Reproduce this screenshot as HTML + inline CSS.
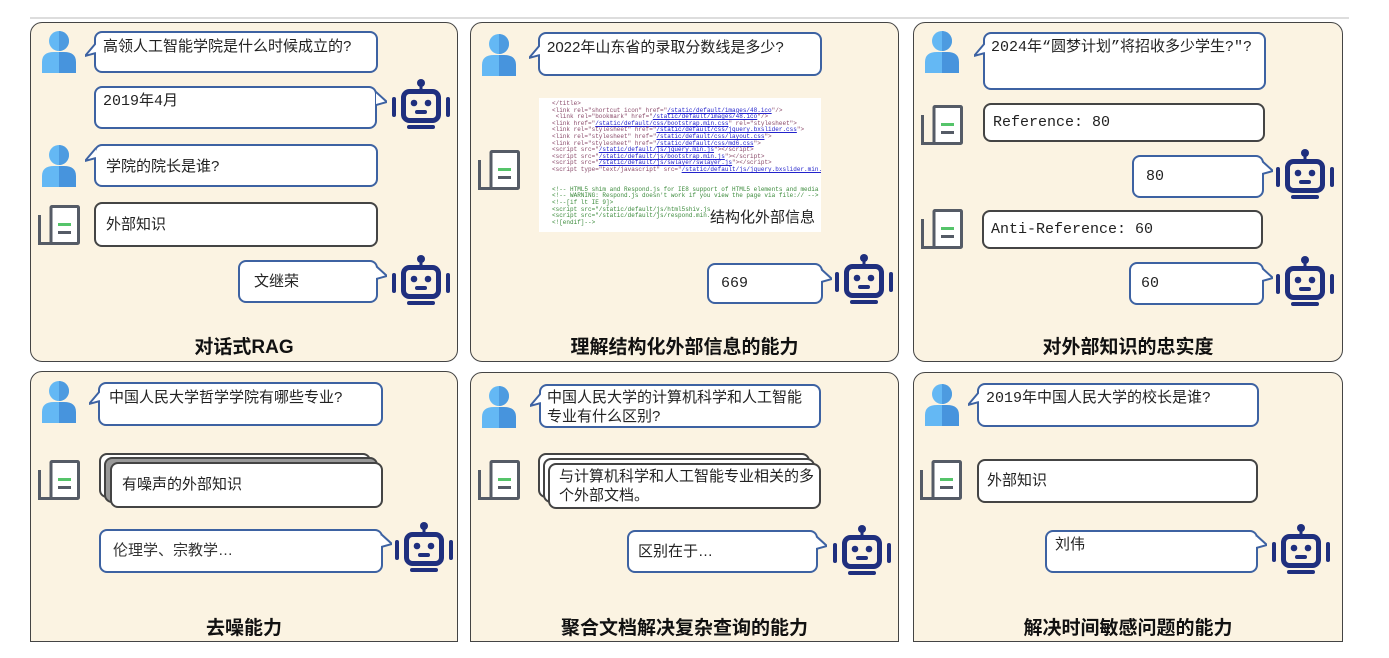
<!DOCTYPE html>
<html><head><meta charset="utf-8"><style>
*{margin:0;padding:0;box-sizing:border-box}
body{width:1389px;height:658px;background:#fff;position:relative;overflow:hidden;font-family:"Liberation Sans","Noto Sans CJK SC",sans-serif;color:#222}
.p{position:absolute;background:#fbf3e2;border:1.5px solid #444;border-radius:12px 12px 0 0}
.b{position:absolute;background:#fff;border:2px solid #3d62a2;border-radius:8px;font-size:15px;line-height:20px;padding:4px 7px;white-space:nowrap}
.k{position:absolute;background:#fff;border:2px solid #444;border-radius:8px;font-size:15px;line-height:20px;padding:0 10px;display:flex;align-items:center;white-space:nowrap}
.m{font-family:"Liberation Mono","Noto Sans CJK SC",monospace}
.t{position:absolute;font-size:19px;font-weight:bold;text-align:center;color:#111}
svg.i{position:absolute;overflow:visible}
</style></head><body>
<svg width="0" height="0" style="position:absolute">
<defs>
<symbol id="u" viewBox="0 0 34 43"><circle cx="17" cy="11" r="10" fill="#64b8f4"/><path d="M17 1a10 10 0 0 1 0 20z" fill="#4d9be0"/><path d="M0 43V32q0-10 12-10h5v21z" fill="#64b8f4"/><path d="M17 22h5q12 0 12 10v11H17z" fill="#4794dd"/></symbol>
<symbol id="r" viewBox="0 0 58 52"><circle cx="29" cy="4" r="4" fill="#1f2f7e"/><rect x="27.5" y="6" width="3" height="6" fill="#1f2f7e"/><rect x="11.5" y="12.5" width="35" height="29" rx="6" fill="none" stroke="#1f2f7e" stroke-width="5"/><circle cx="22" cy="24" r="3.3" fill="#1f2f7e"/><circle cx="36" cy="24" r="3.3" fill="#1f2f7e"/><rect x="23" y="31" width="12" height="4" rx="2" fill="#1f2f7e"/><rect x="0" y="18" width="4" height="20" rx="2" fill="#1f2f7e"/><rect x="54" y="18" width="4" height="20" rx="2" fill="#1f2f7e"/><rect x="15" y="46" width="28" height="4" rx="2" fill="#1f2f7e"/></symbol>
<symbol id="d" viewBox="0 0 42 40"><path d="M1.5 10V38.5H14" fill="none" stroke="#555b66" stroke-width="3"/><rect x="13" y="1.5" width="27.5" height="37" rx="1" fill="#fff" stroke="#555b66" stroke-width="3"/><rect x="20" y="18" width="13" height="3" fill="#55c46a"/><rect x="20" y="26" width="13" height="3" fill="#555b66"/></symbol>
<symbol id="tl" viewBox="0 0 11 16"><path d="M11 1L0 14 11 11" fill="#fff" stroke="#3d62a2" stroke-width="2"/></symbol>
<symbol id="tr" viewBox="0 0 11 16"><path d="M0 1L11 11 0 14" fill="#fff" stroke="#3d62a2" stroke-width="2"/></symbol>
</defs></svg>
<div style="position:absolute;left:30px;top:17px;width:1319px;height:2px;background:#ddd"></div>

<!-- panel 1 -->
<div class="p" style="left:30px;top:22px;width:428px;height:340px;border-radius:12px"></div>
<svg class="i" style="left:42px;top:30px" width="34" height="43"><use href="#u"/></svg>
<div class="b" style="left:94px;top:31px;width:284px;height:42px">高领人工智能学院是什么时候成立的?</div>
<svg class="i" style="left:85px;top:42px" width="11" height="16"><use href="#tl"/></svg>
<div class="b m" style="left:94px;top:86px;width:283px;height:43px">2019年4月</div>
<svg class="i" style="left:376px;top:91px" width="11" height="16"><use href="#tr"/></svg>
<svg class="i" style="left:392px;top:79px" width="58" height="52"><use href="#r"/></svg>
<svg class="i" style="left:42px;top:144px" width="34" height="43"><use href="#u"/></svg>
<div class="b" style="left:94px;top:144px;width:284px;height:43px;padding-top:11px;padding-left:10px">学院的院长是谁?</div>
<svg class="i" style="left:85px;top:147px" width="11" height="16"><use href="#tl"/></svg>
<svg class="i" style="left:38px;top:205px" width="42" height="40"><use href="#d"/></svg>
<div class="k" style="left:94px;top:202px;width:284px;height:45px">外部知识</div>
<div class="b" style="left:238px;top:260px;width:140px;height:43px;padding:10px 14px">文继荣</div>
<svg class="i" style="left:376px;top:265px" width="11" height="16"><use href="#tr"/></svg>
<svg class="i" style="left:392px;top:255px" width="58" height="52"><use href="#r"/></svg>
<div class="t" style="left:30px;top:332px;width:428px">对话式RAG</div>

<!-- panel 2 -->
<div class="p" style="left:470px;top:22px;width:429px;height:340px;border-radius:12px"></div>
<svg class="i" style="left:482px;top:33px" width="34" height="43"><use href="#u"/></svg>
<div class="b" style="left:538px;top:32px;width:284px;height:44px">2022年山东省的录取分数线是多少?</div>
<svg class="i" style="left:529px;top:44px" width="11" height="16"><use href="#tl"/></svg>
<div style="position:absolute;left:539px;top:98px;width:282px;height:134px;background:#fff;font-family:'Liberation Mono',monospace;font-size:6px;line-height:6.6px;color:#8a4a6a;padding:3px 0 0 13px;white-space:pre;overflow:hidden">&lt;/title&gt;
&lt;link rel="shortcut icon" href="<u style="color:#22c">/static/default/images/48.ico</u>"/&gt;
 &lt;link rel="bookmark" href="<u style="color:#22c">/static/default/images/48.ico</u>"/&gt;
&lt;link href="<u style="color:#22c">/static/default/css/bootstrap.min.css</u>" rel="stylesheet"&gt;
&lt;link rel="stylesheet" href="<u style="color:#22c">/static/default/css/jquery.bxslider.css</u>"&gt;
&lt;link rel="stylesheet" href="<u style="color:#22c">/static/default/css/layout.css</u>"&gt;
&lt;link rel="stylesheet" href="<u style="color:#22c">/static/default/css/md6.css</u>"&gt;
&lt;script src="<u style="color:#22c">/static/default/js/jquery.min.js</u>"&gt;&lt;/script&gt;
&lt;script src="<u style="color:#22c">/static/default/js/bootstrap.min.js</u>"&gt;&lt;/script&gt;
&lt;script src="<u style="color:#22c">/static/default/js/swlayer/swlayer.js</u>"&gt;&lt;/script&gt;
&lt;script type="text/javascript" src="<u style="color:#22c">/static/default/js/jquery.bxslider.min.js</u>"&gt;&lt;/script&gt;


<span style="color:#3a8a3a">&lt;!-- HTML5 shim and Respond.js for IE8 support of HTML5 elements and media queries --&gt;
&lt;!-- WARNING: Respond.js doesn't work if you view the page via file:// --&gt;
&lt;!--[if lt IE 9]&gt;
&lt;script src="/static/default/js/html5shiv.js"&gt;&lt;/script&gt;
&lt;script src="/static/default/js/respond.min.js"&gt;&lt;/script&gt;
&lt;![endif]--&gt;</span>

&lt;script language ="javascript"&gt;
<span style="color:#222">    function ValidateValue(textbox)</span></div>
<div style="position:absolute;left:710px;top:206px;font-size:15px;background:#fff;color:#222">结构化外部信息</div>
<svg class="i" style="left:478px;top:150px" width="42" height="40"><use href="#d"/></svg>
<div class="b m" style="left:707px;top:263px;width:116px;height:41px;padding:9px 12px">669</div>
<svg class="i" style="left:821px;top:268px" width="11" height="16"><use href="#tr"/></svg>
<svg class="i" style="left:835px;top:254px" width="58" height="52"><use href="#r"/></svg>
<div class="t" style="left:470px;top:332px;width:429px">理解结构化外部信息的能力</div>

<!-- panel 3 -->
<div class="p" style="left:913px;top:22px;width:430px;height:340px;border-radius:12px"></div>
<svg class="i" style="left:925px;top:30px" width="34" height="43"><use href="#u"/></svg>
<div class="b m" style="left:983px;top:32px;width:283px;height:58px;padding-left:6px">2024年“圆梦计划”将招收多少学生?"?</div>
<svg class="i" style="left:974px;top:42px" width="11" height="16"><use href="#tl"/></svg>
<svg class="i" style="left:921px;top:105px" width="42" height="40"><use href="#d"/></svg>
<div class="k m" style="left:983px;top:103px;width:282px;height:39px;padding-left:8px">Reference: 80</div>
<div class="b m" style="left:1132px;top:155px;width:132px;height:43px;padding:10px 12px">80</div>
<svg class="i" style="left:1262px;top:160px" width="11" height="16"><use href="#tr"/></svg>
<svg class="i" style="left:1276px;top:149px" width="58" height="52"><use href="#r"/></svg>
<svg class="i" style="left:921px;top:209px" width="42" height="40"><use href="#d"/></svg>
<div class="k m" style="left:982px;top:210px;width:281px;height:39px;padding-left:7px">Anti-Reference: 60</div>
<div class="b m" style="left:1129px;top:262px;width:135px;height:43px;padding:10px 10px">60</div>
<svg class="i" style="left:1262px;top:267px" width="11" height="16"><use href="#tr"/></svg>
<svg class="i" style="left:1276px;top:256px" width="58" height="52"><use href="#r"/></svg>
<div class="t" style="left:913px;top:332px;width:430px">对外部知识的忠实度</div>

<!-- panel 4 -->
<div class="p" style="left:30px;top:371px;width:428px;height:271px"></div>
<svg class="i" style="left:42px;top:380px" width="34" height="43"><use href="#u"/></svg>
<div class="b" style="left:98px;top:382px;width:285px;height:44px;padding-left:9px">中国人民大学哲学学院有哪些专业?</div>
<svg class="i" style="left:89px;top:390px" width="11" height="16"><use href="#tl"/></svg>
<svg class="i" style="left:38px;top:460px" width="42" height="40"><use href="#d"/></svg>
<div class="k" style="left:99px;top:453px;width:272px;height:45px"></div>
<div class="k" style="left:104px;top:457px;width:274px;height:46px;background:#999"></div>
<div class="k" style="left:110px;top:462px;width:273px;height:46px">有噪声的外部知识</div>
<div class="b" style="left:99px;top:529px;width:284px;height:44px;padding:10px 12px;color:#333">伦理学、宗教学…</div>
<svg class="i" style="left:381px;top:533px" width="11" height="16"><use href="#tr"/></svg>
<svg class="i" style="left:395px;top:522px" width="58" height="52"><use href="#r"/></svg>
<div class="t" style="left:30px;top:613px;width:428px">去噪能力</div>

<!-- panel 5 -->
<div class="p" style="left:470px;top:372px;width:429px;height:270px"></div>
<svg class="i" style="left:482px;top:385px" width="34" height="43"><use href="#u"/></svg>
<div class="b" style="left:539px;top:384px;width:282px;height:44px;padding:2px 6px;line-height:19px">中国人民大学的计算机科学和人工智能<br>专业有什么区别?</div>
<svg class="i" style="left:530px;top:392px" width="11" height="16"><use href="#tl"/></svg>
<svg class="i" style="left:478px;top:460px" width="42" height="40"><use href="#d"/></svg>
<div class="k" style="left:538px;top:453px;width:272px;height:45px"></div>
<div class="k" style="left:543px;top:458px;width:272px;height:45px"></div>
<div class="k" style="left:548px;top:463px;width:273px;height:46px;line-height:19px;padding:0 0 0 9px">与计算机科学和人工智能专业相关的多<br>个外部文档。</div>
<div class="b" style="left:627px;top:530px;width:191px;height:43px;padding:10px 9px">区别在于…</div>
<svg class="i" style="left:816px;top:535px" width="11" height="16"><use href="#tr"/></svg>
<svg class="i" style="left:833px;top:525px" width="58" height="52"><use href="#r"/></svg>
<div class="t" style="left:470px;top:613px;width:429px">聚合文档解决复杂查询的能力</div>

<!-- panel 6 -->
<div class="p" style="left:913px;top:372px;width:430px;height:270px"></div>
<svg class="i" style="left:925px;top:383px" width="34" height="43"><use href="#u"/></svg>
<div class="b m" style="left:977px;top:383px;width:282px;height:44px;padding-left:7px">2019年中国人民大学的校长是谁?</div>
<svg class="i" style="left:968px;top:391px" width="11" height="16"><use href="#tl"/></svg>
<svg class="i" style="left:920px;top:460px" width="42" height="40"><use href="#d"/></svg>
<div class="k" style="left:977px;top:459px;width:281px;height:44px;padding-left:8px">外部知识</div>
<div class="b" style="left:1045px;top:530px;width:213px;height:43px;padding:3px 8px">刘伟</div>
<svg class="i" style="left:1256px;top:534px" width="11" height="16"><use href="#tr"/></svg>
<svg class="i" style="left:1272px;top:524px" width="58" height="52"><use href="#r"/></svg>
<div class="t" style="left:913px;top:613px;width:430px">解决时间敏感问题的能力</div>
</body></html>
